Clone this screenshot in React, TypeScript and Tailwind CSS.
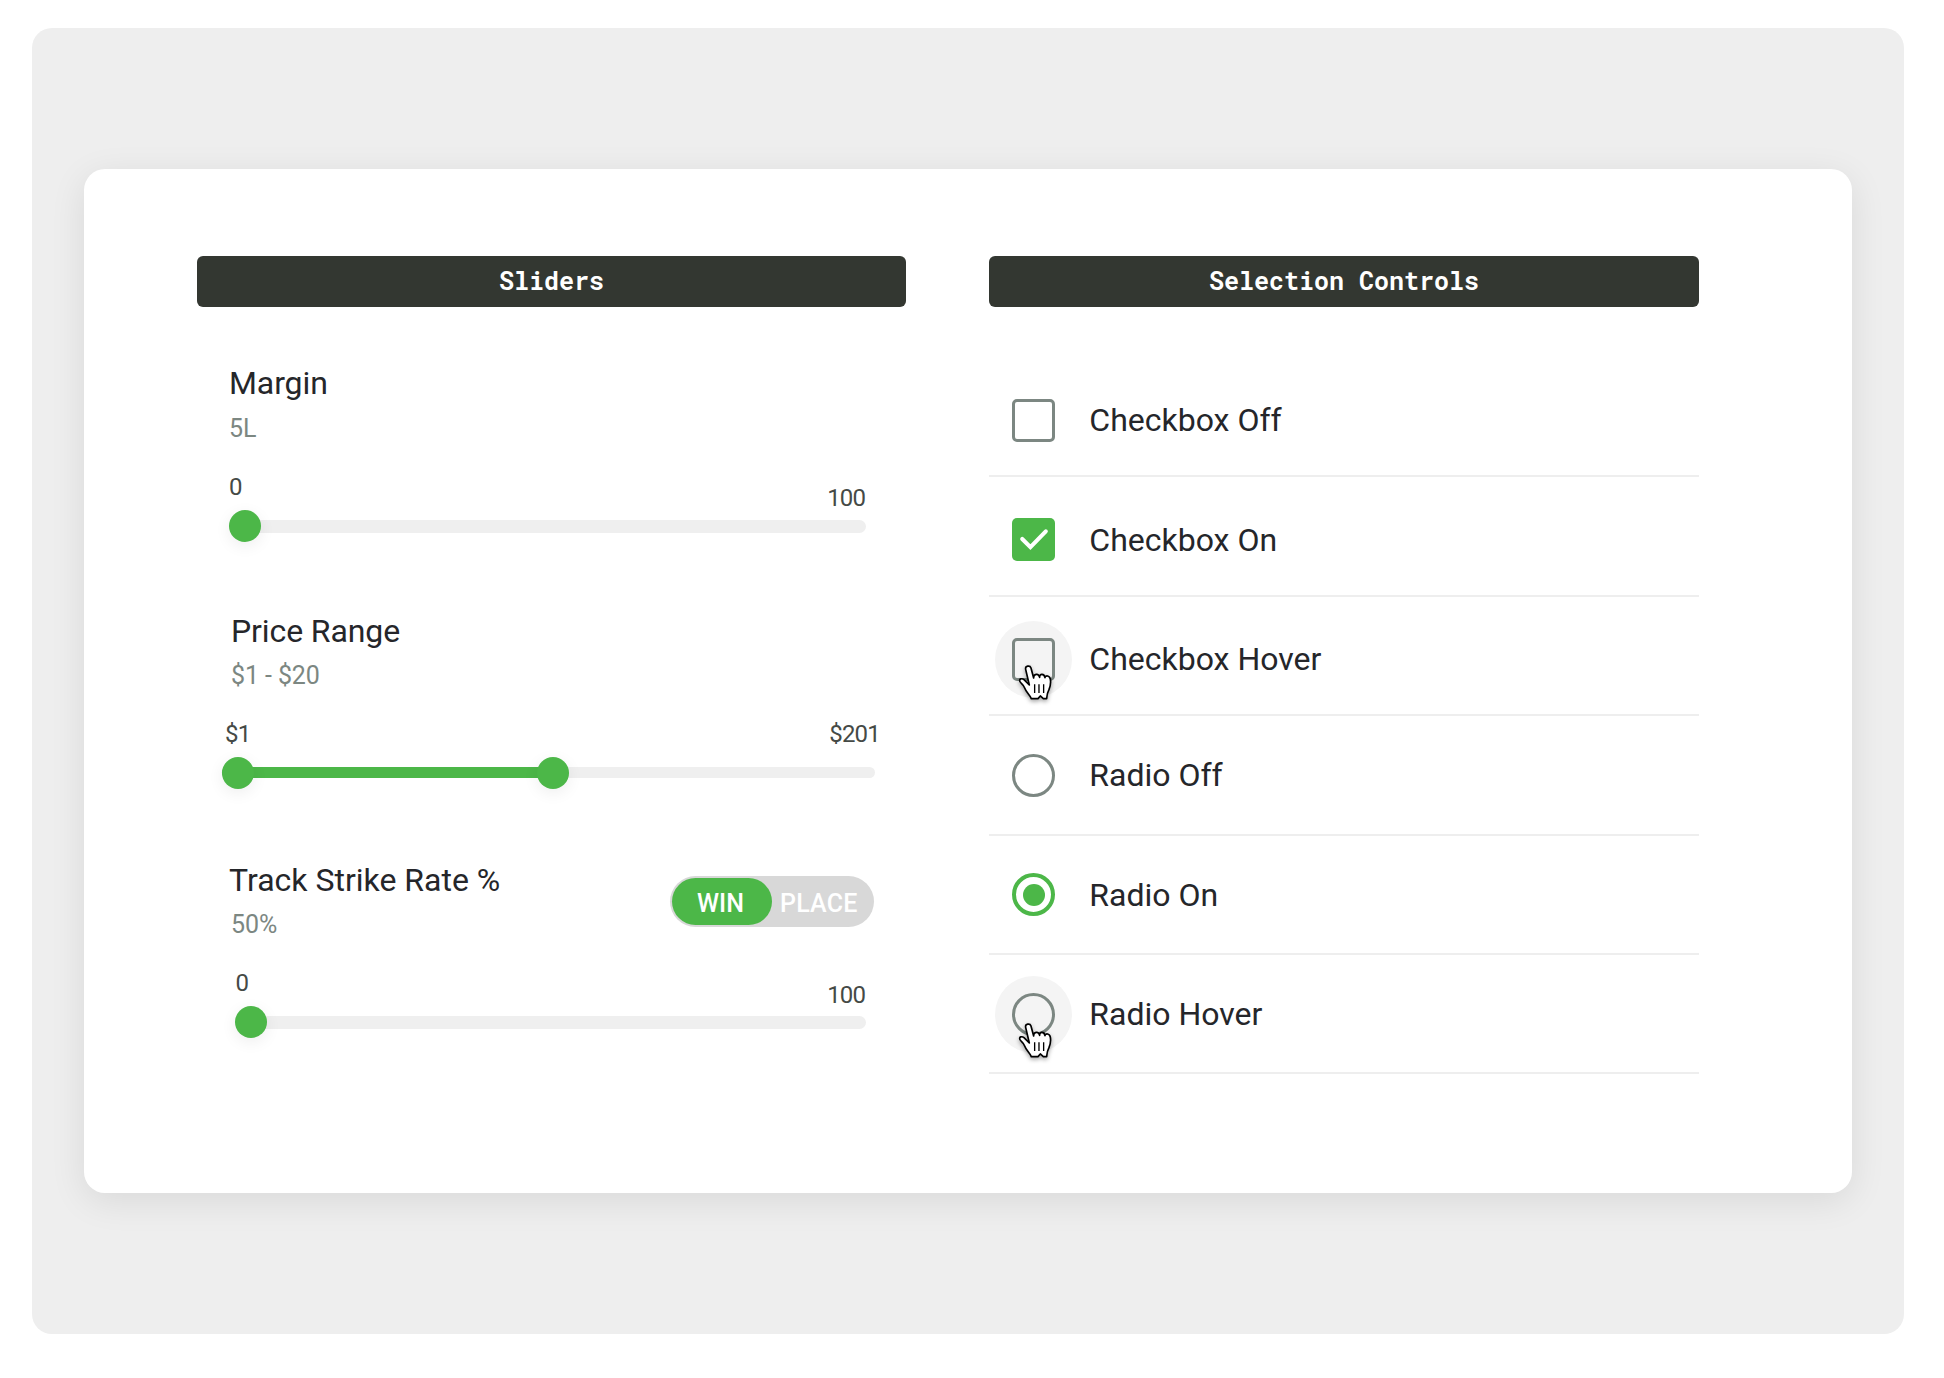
import type { ReactNode } from "react";

function Header({ children }: { children: ReactNode }) {
  return (
    <div className="h-[51px] rounded-[6px] bg-[#333731] text-center font-['Roboto_Mono','Liberation_Mono',monospace] text-[25px] leading-[50px] font-bold text-white">
      {children}
    </div>
  );
}

function Thumb({ className }: { className: string }) {
  return (
    <span
      className={`absolute size-8 rounded-full bg-[#4cb748] shadow-[0_4px_16px_rgba(0,0,0,0.07)] ${className}`}
    />
  );
}

function Cursor({ className }: { className: string }) {
  return (
    <svg
      viewBox="-6 -6 112 124"
      className={`absolute left-[21.6px] h-[41.3px] w-[37.3px] overflow-visible drop-shadow-[0_2px_2px_rgba(0,0,0,0.35)] ${className}`}
    >
      <path
        d="M20 13C18 2 33 0 36 9L44 39C43 26 59 24 62 37C61 25 76 25 78 38C79 30 92 31 94 42C96 52 95 62 90 74C86 81 84 86 83 101H73L64 93L57 101H37C33 90 22 83 17 69C13 58 7 57 3 50C-1 41 9 39 15 44L31 60Z"
        fill="#fff"
        stroke="#000"
        strokeWidth="5"
        strokeLinejoin="round"
      />
      <path d="M47 58V84M60 58V84M74 58V84" stroke="#000" strokeWidth="4" fill="none" />
    </svg>
  );
}

const box = "size-[43px] border-[3px] border-[#7c8782]";

function Row({ label, lift, children }: { label: string; lift?: boolean; children: ReactNode }) {
  return (
    <div className="h-[119.4px] border-b-2 border-[#eeeeee]">
      <div className={`flex h-[80px] items-center pl-[6.3px] ${lift ? "mt-[19.1px]" : "mt-[22.3px]"}`}>
        <div className="relative flex size-[77px] items-center justify-center">{children}</div>
        <span className="ml-[17px] text-[32px] leading-10 whitespace-nowrap">{label}</span>
      </div>
    </div>
  );
}

function Halo() {
  return <span className="absolute inset-0 rounded-full bg-[#f4f4f4]" />;
}

export default function App() {
  return (
    <div className="h-[1378px] w-[1944px] bg-white px-8 pt-7 font-[Roboto,sans-serif] text-[#25262a]">
      <div className="h-[1306px] w-[1872px] rounded-[20px] bg-[#eeeeee] px-[52px] pt-[141px]">
        <div className="flex h-[1024px] w-[1768px] gap-[83px] rounded-[21px] bg-white pt-[87px] pl-[113px] shadow-[0_8px_36px_rgba(0,0,0,0.09)]">
          <section className="w-[709px]">
            <Header>Sliders</Header>

            <div className="mt-[56px] h-[179px] pl-8">
              <h3 className="text-[32px] leading-10 tracking-[-0.1px]">Margin</h3>
              <p className="mt-[6px] text-[25px] leading-10 text-[#7c8782]">5L</p>
              <div className="mt-[18px] flex h-[53px] w-[637px] justify-between text-[24px] leading-10 tracking-[-0.9px] text-[#454a46]">
                <span>0</span>
                <span className="mt-[11px] pr-px">100</span>
              </div>
              <div className="relative h-[13px] w-[637px] rounded-full bg-[#efefef]">
                <Thumb className="-top-[10.5px] -left-[0.5px]" />
              </div>
            </div>

            <div className="mt-[69px] h-[178px] pl-[25px]">
              <h3 className="pl-[9px] text-[32px] leading-10 tracking-[-0.1px]">Price Range</h3>
              <p className="mt-[5px] pl-[9px] text-[25px] leading-10 tracking-[-0.1px] text-[#7c8782]">$1 - $20</p>
              <div className="mt-[18px] flex h-[53px] w-[658px] justify-between text-[24px] leading-10 tracking-[-0.8px] text-[#454a46]">
                <span className="pl-[3px]">$1</span>
                <span>$201</span>
              </div>
              <div className="relative h-[11px] w-[653px] rounded-full bg-[#efefef]">
                <span className="absolute inset-y-0 left-0 w-[330px] rounded-full bg-[#4cb748]" />
                <Thumb className="-top-[10.5px] left-[0.3px]" />
                <Thumb className="-top-[10.5px] left-[314.5px]" />
              </div>
            </div>

            <div className="mt-[71px] pl-8">
              <div className="flex h-[83px] w-[645px] justify-between">
                <div>
                  <h3 className="text-[32px] leading-10 whitespace-nowrap">Track Strike Rate %</h3>
                  <p className="mt-[5px] pl-[2px] text-[25px] leading-10 text-[#7c8782]">50%</p>
                </div>
                <div className="mt-4 flex h-[51px] w-[204px] rounded-full bg-[#d8d8d8] pt-[2px] pl-[2px] text-[25px] leading-[51px] font-medium text-white">
                  <span className="h-[47px] w-[100px] rounded-full bg-[#4cb748] pr-[3px] text-center">WIN</span>
                  <span className="pl-[8px] tracking-[0.2px]">PLACE</span>
                </div>
              </div>
              <div className="mt-[20px] flex h-[53px] w-[637px] justify-between text-[24px] leading-10 tracking-[-0.9px] text-[#454a46]">
                <span className="pl-[6.5px]">0</span>
                <span className="mt-[12px] pr-px">100</span>
              </div>
              <div className="relative ml-[8px] h-[13px] w-[629px] rounded-full bg-[#efefef]">
                <Thumb className="-top-[10px] -left-[2.5px]" />
              </div>
            </div>
          </section>

          <section className="w-[710px]">
            <Header>Selection Controls</Header>
            <div className="mt-[51px] flex flex-col">
              <Row label="Checkbox Off">
                <span className={`${box} rounded-[5px]`} />
              </Row>
              <Row label="Checkbox On">
                <span className="flex size-[43px] items-center justify-center rounded-[5px] bg-[#4cb748]">
                  <svg viewBox="0 0 42 42" className="size-full" fill="none">
                    <path d="M10 20.5L18 28.5L33 13" stroke="#fff" strokeWidth="4" strokeLinecap="round" />
                  </svg>
                </span>
              </Row>
              <Row label="Checkbox Hover">
                <Halo />
                <span className={`relative ${box} rounded-[5px]`} />
                <Cursor className="top-[42.5px]" />
              </Row>
              <Row label="Radio Off" lift>
                <span className={`${box} rounded-full`} />
              </Row>
              <Row label="Radio On" lift>
                <span className="flex size-[43px] items-center justify-center rounded-full border-4 border-[#4cb748]">
                  <span className="size-[22px] rounded-full bg-[#4cb748]" />
                </span>
              </Row>
              <Row label="Radio Hover" lift>
                <Halo />
                <span className={`relative ${box} rounded-full`} />
                <Cursor className="top-[45.5px]" />
              </Row>
            </div>
          </section>
        </div>
      </div>
    </div>
  );
}
